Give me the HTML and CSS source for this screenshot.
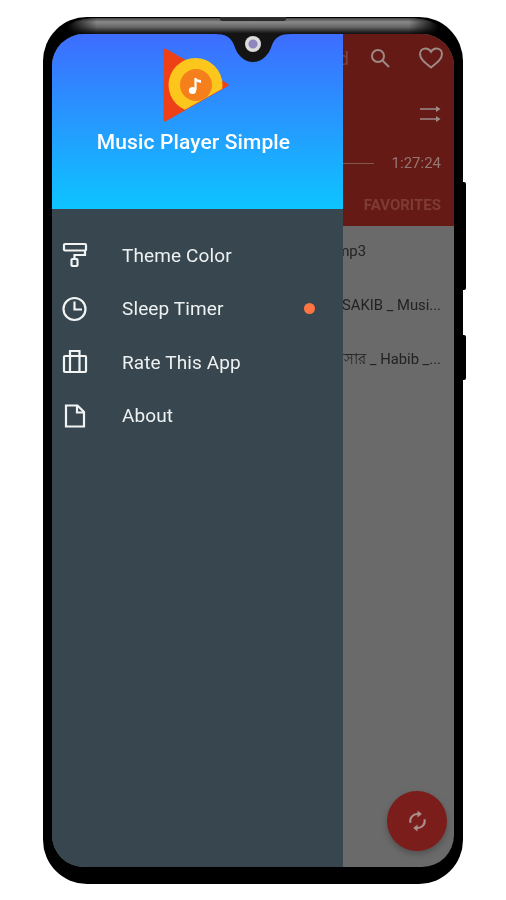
FILE: index.html
```html
<!DOCTYPE html>
<html>
	<head>
		<meta charset="UTF-8">
		<title>Music Player Simple</title>
		<link rel="stylesheet" href="styles.css">
	</head>
	<body>
		<div class="phone">
			<div class="speaker"></div>
			<div class="btn btn-power"></div>
			<div class="btn btn-volume"></div>
			<div class="screen">
				<div class="drawer">
					<div class="drawer-head">
						<svg class="logo" width="74" height="74" viewBox="0 0 74 74">
							<defs>
								<clipPath id="logoClip"><polygon points="0,0 74,0 72,37 6,74 0,74"/></clipPath>
							</defs>
							<polygon points="8,2 70,37 8,72" fill="#ee4117" stroke="#ee4117" stroke-width="3" stroke-linejoin="round"/>
							<circle cx="38.5" cy="37" r="27" fill="#fcc61c" clip-path="url(#logoClip)"/>
							<circle cx="39" cy="37" r="16" fill="#f57f1a"/>
							<path d="M38.5 30v12" stroke="#fff" stroke-width="2.2" fill="none"/>
							<path d="M38 29.5c2 2.500 4 2 6 2.500v3c-2-.5-4-1-6-2.500z" fill="#fff"/>
							<circle cx="35.500" cy="42.500" r="3.600" fill="#fff"/>
						</svg>
						<div class="app-title">Music Player Simple</div>
					</div>
					<ul class="menu">
						<li>
							<svg class="menu-icon" width="26" height="26" viewBox="0 0 26 26" fill="none" stroke="#f2f4f4" stroke-width="2.200">
								<rect x="2" y="2" width="22" height="6.500" rx="1"/>
								<path d="M23 8.500v4.500H12.500V17"/>
								<rect x="9.500" y="17" width="6" height="7" rx="1"/>
							</svg>
							<span>Theme Color</span>
						</li>
						<li>
							<svg class="menu-icon" width="26" height="26" viewBox="0 0 26 26" fill="none" stroke="#f2f4f4" stroke-width="2.200">
								<circle cx="12.500" cy="13" r="11"/>
								<path d="M12.500 5.500V13.500H20"/>
							</svg>
							<span>Sleep Timer</span>
							<i class="dot"></i>
						</li>
						<li>
							<svg class="menu-icon" width="26" height="26" viewBox="0 0 26 26" fill="none" stroke="#f2f4f4" stroke-width="2.200">
								<rect x="2" y="7" width="22" height="16" rx="1"/>
								<path d="M8 23V2H17.500V23"/>
							</svg>
							<span>Rate This App</span>
						</li>
						<li>
							<svg class="menu-icon" width="26" height="26" viewBox="0 0 26 26" fill="none" stroke="#f2f4f4" stroke-width="2.200">
								<path d="M4 2.500H15.500L22 9V23.500H4z"/>
								<path d="M15 3V9.500H21.500"/>
							</svg>
							<span>About</span>
						</li>
					</ul>
				</div>
				<div class="main">
					<div class="main-head">
						<div class="toolbar">
							<span class="tool-text">Playlist Simple Sound</span>
							<svg width="22" height="22" viewBox="0 0 22 22" fill="none" stroke="#9c8a86" stroke-width="2">
								<circle cx="9" cy="9" r="6"/>
								<path d="M13.500 13.500L20 20"/>
							</svg>
							<svg width="26" height="24" viewBox="0 0 26 24" fill="none" stroke="#9c8a86" stroke-width="2">
								<path d="M13 21.500C6 16 2 12.500 2 8c0-3.500 2.500-5.500 5.500-5.500 2.300 0 4.300 1.200 5.500 3.200 1.200-2 3.200-3.200 5.500-3.200C21.500 2.500 24 4.500 24 8c0 4.500-4 8-11 13.500z"/>
							</svg>
						</div>
						<div class="shuffle">
							<svg width="22" height="18" viewBox="0 0 22 18" fill="none" stroke="#9c8a86" stroke-width="1.500">
								<path d="M1 4H19M1 14H19"/>
								<path d="M17 1L21.500 4 17 7zM17 11L21.500 14 17 17z" fill="#9c8a86" stroke="none"/>
							</svg>
						</div>
						<div class="progress">
							<div class="progress-line"></div>
							<span class="time">1:27:24</span>
						</div>
						<div class="tabs">FAVORITES</div>
					</div>
					<ul class="songs">
						<li>Track recording mp3</li>
						<li>Bangla song SAKIB _ Musi...</li>
						<li>ভালোবাসার _ Habib _...</li>
					</ul>
					<div class="fab">
						<svg width="21" height="24" viewBox="0 0 24 26" fill="none" stroke="#a98f8b" stroke-width="2.400">
							<path d="M4 15a8 8 0 0 1 8-10h2M20 11a8 8 0 0 1-8 10h-2"/>
							<path d="M12 1l5 4-5 4zM12 25l-5-4 5-4z" fill="#a98f8b" stroke="none"/>
						</svg>
					</div>
				</div>
				<svg class="notch" width="76" height="29" viewBox="0 0 76 29">
					<path d="M0 0H76C66 0 60 3 57 11 54 21 47 28 38 28S22 21 19 11C16 3 10 0 0 0z" fill="#141414"/>
				</svg>
				<div class="camera"></div>
			</div>
		</div>
	</body>
</html>
```

FILE: styles.css
```css
*{
    margin: 0;
    padding: 0;
    box-sizing: border-box;
}
html,body{
    height: 100%;
    background: #fff;
    overflow: hidden;
}
body{
    font-family: Roboto, "Noto Sans", "Liberation Sans", sans-serif;
}
ul{
    list-style: none;
}
.phone{
    position: relative;
    margin: 17px 0 0 43px;
    width: 420px;
    height: 867px;
    padding: 17px 9px;
    background: #000;
    border-radius: 44px;
}
.phone::before{
    content: "";
    position: absolute;
    top: 1px;
    left: 8px;
    right: 8px;
    height: 70px;
    border-radius: 40px 40px 0 0;
    background: linear-gradient(#444 0, #8a8a8a 4px, #666 9px, #222 14px, #000 18px);
    -webkit-mask-image: linear-gradient(90deg, transparent 16px, #000 46px, #000 calc(100% - 46px), transparent calc(100% - 16px));
    mask-image: linear-gradient(90deg, transparent 16px, #000 46px, #000 calc(100% - 46px), transparent calc(100% - 16px));
}
.speaker{
    position: absolute;
    top: 0;
    left: 177px;
    width: 66px;
    height: 4px;
    background: #2b2b2b;
    border-radius: 0 0 2px 2px;
}
.btn{
    position: absolute;
    right: -3px;
    width: 3px;
    background: #000;
    border-radius: 0 2px 2px 0;
}
.btn-power{
    top: 165px;
    height: 108px;
}
.btn-volume{
    top: 318px;
    height: 45px;
}
.screen{
    position: relative;
    display: flex;
    height: 100%;
    overflow: hidden;
    border-radius: 32px;
    background: #6a6a6a;
    filter: blur(.4px);
}
.drawer{
    flex: 0 0 291px;
    display: flex;
    flex-direction: column;
    background: #38474f;
}
.drawer-head{
    height: 175px;
    padding: 14px 8px 0 0;
    display: flex;
    flex-direction: column;
    align-items: center;
    background: linear-gradient(#3e6dff, #0dc4ff);
}
.logo{
    display: block;
}
.app-title{
    margin-top: 8px;
    color: #fff;
    font-size: 21px;
    line-height: 24px;
    font-weight: 500;
    letter-spacing: .12px;
    white-space: nowrap;
}
.menu{
    padding-top: 19.500px;
}
.menu li{
    display: flex;
    align-items: center;
    height: 53.500px;
    padding-left: 10px;
    color: #eef1f1;
    font-size: 19px;
    letter-spacing: .12px;
}
.menu-icon{
    flex: none;
    margin-right: 34px;
}
.menu li span{
    white-space: nowrap;
}
.dot{
    margin-left: auto;
    margin-right: 28px;
    width: 11px;
    height: 11px;
    border-radius: 50%;
    background: #ff7443;
}
.main{
    position: relative;
    flex: 1;
    min-width: 0;
    overflow: hidden;
    display: flex;
    flex-direction: column;
}
.main-head{
    flex: none;
    height: 192px;
    background: #661a15;
}
.toolbar{
    height: 48px;
    display: flex;
    align-items: center;
    justify-content: flex-end;
    padding-right: 10px;
}
.tool-text{
    flex: none;
    margin-right: 20px;
    color: #7d443e;
    font-size: 19px;
    white-space: nowrap;
}
.toolbar svg{
    flex: none;
}
.toolbar svg + svg{
    margin-left: 27px;
}
.shuffle{
    height: 68px;
    display: flex;
    align-items: center;
    justify-content: flex-end;
    padding: 0 13px 4px 0;
}
.progress{
    height: 26px;
    display: flex;
    align-items: center;
    padding-right: 13px;
    color: #957571;
    font-size: 15px;
}
.progress-line{
    width: 31px;
    height: 1px;
    background: #84544f;
}
.time{
    margin-left: auto;
}
.tabs{
    padding: 20px 13px 0 0;
    text-align: right;
    color: #7f3c36;
    font-size: 15px;
    line-height: 18px;
    font-weight: 700;
}
.songs li{
    display: flex;
    justify-content: flex-end;
    height: 54px;
    padding: 16px 13px 0 0;
    color: #222;
    font-size: 14.800px;
    line-height: 18px;
    white-space: nowrap;
}
.songs li:first-child{
    padding-right: 88px;
}
.fab{
    position: absolute;
    right: 7px;
    bottom: 16px;
    width: 60px;
    height: 60px;
    border-radius: 50%;
    display: flex;
    align-items: center;
    justify-content: center;
    background: #7b1d1a;
    box-shadow: 0 3px 6px rgba(0,0,0,.25);
}
.notch{
    position: absolute;
    top: 0;
    left: 163px;
}
.camera{
    position: absolute;
    top: 2px;
    left: 193px;
    width: 16px;
    height: 16px;
    border-radius: 50%;
    background: radial-gradient(#8e86bd 0, #8e86bd 4px, #dcdcdc 5px);
}
```
